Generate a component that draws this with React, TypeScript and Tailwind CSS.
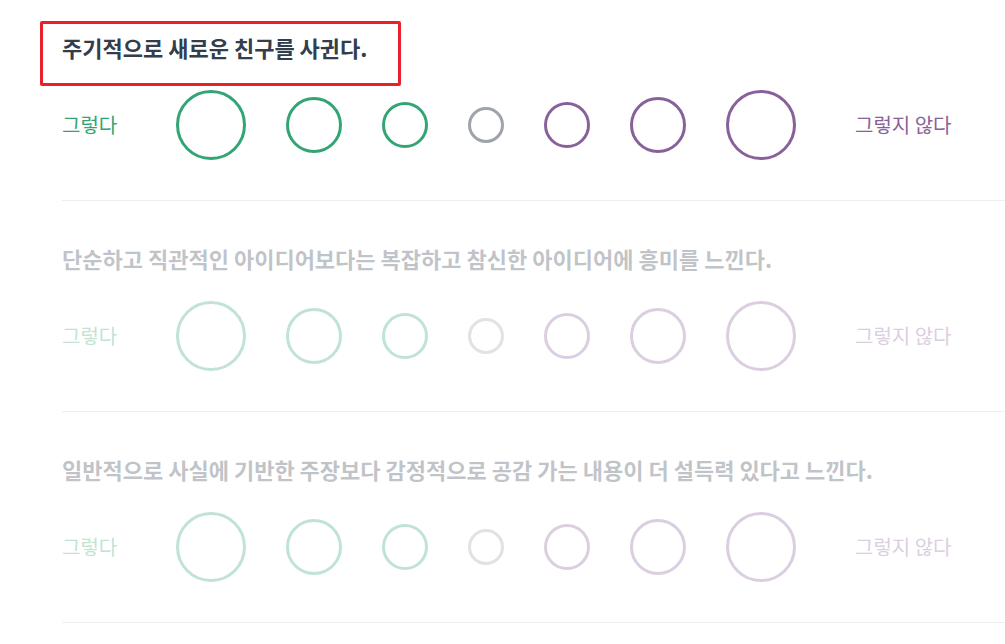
const questions = [
  { text: "주기적으로 새로운 친구를 사귄다.", active: true },
  { text: "단순하고 직관적인 아이디어보다는 복잡하고 참신한 아이디어에 흥미를 느낀다.", active: false },
  { text: "일반적으로 사실에 기반한 주장보다 감정적으로 공감 가는 내용이 더 설득력 있다고 느낀다.", active: false },
];

const options = [
  { size: "h-[70px] w-[70px]", color: "border-[#33a474]" },
  { size: "h-[56px] w-[56px]", color: "border-[#33a474]" },
  { size: "h-[46px] w-[46px]", color: "border-[#33a474]" },
  { size: "h-[36px] w-[36px]", color: "border-[#9fa3ab]" },
  { size: "h-[46px] w-[46px]", color: "border-[#88619a]" },
  { size: "h-[56px] w-[56px]", color: "border-[#88619a]" },
  { size: "h-[70px] w-[70px]", color: "border-[#88619a]" },
];

function Question({ text, active, first }: { text: string; active: boolean; first: boolean }) {
  return (
    <section
      className={`border-b border-[#eeeeee] pb-[40px] ${first ? "" : "pt-[43px]"}`}
    >
      <div className={active ? "" : "opacity-30"}>
        <div className="relative">
          {active && (
            <div className="pointer-events-none absolute -left-[22px] -top-[12px] h-[65px] w-[361px] rounded-[2px] border-[3px] border-[#e8202a]" />
          )}
          <h2 className="whitespace-nowrap text-[22px] font-bold leading-[28px] text-[#333d4b]">{text}</h2>
        </div>

        <div className="mt-[29px] flex h-[70px] items-center">
          <span className="w-[114px] text-[20px] text-[#33a474]">그렇다</span>
          <div className="flex items-center gap-10">
            {options.map((o, i) => (
              <button
                key={i}
                type="button"
                className={`${o.size} ${o.color} shrink-0 rounded-full border-[3px] bg-white`}
              />
            ))}
          </div>
          <span className="ml-[59px] text-[20px] text-[#88619a]">그렇지 않다</span>
        </div>
      </div>
    </section>
  );
}

export default function App() {
  return (
    <div
      className="min-h-screen overflow-hidden bg-white pl-[62px] pt-[33px]"
      style={{ fontFamily: '"Noto Sans CJK KR", "Noto Sans", sans-serif' }}
    >
      <div className="w-[1000px]">
        {questions.map((q, i) => (
          <Question key={i} text={q.text} active={q.active} first={i === 0} />
        ))}
      </div>
    </div>
  );
}
